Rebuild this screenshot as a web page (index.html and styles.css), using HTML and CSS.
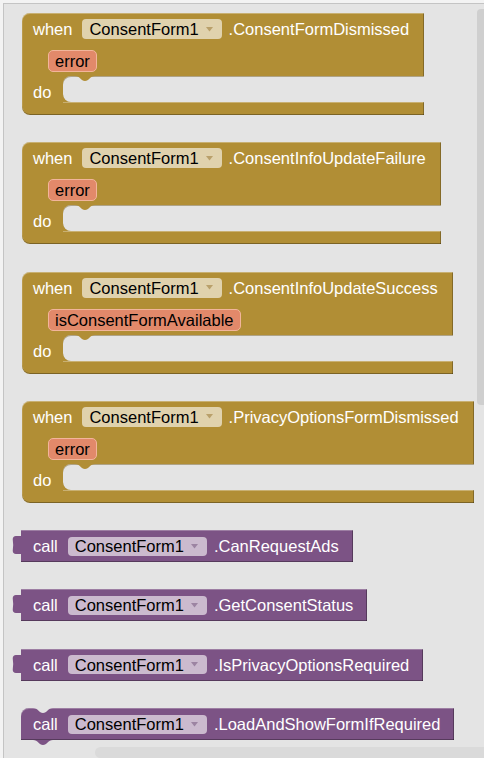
FILE: index.html
```html
<!DOCTYPE html>
<html>
<head>
<meta charset="utf-8">
<link rel="stylesheet" href="styles.css">
</head>
<body>
<div class="workspace">
  <div class="stack">

    <div class="event">
      <div class="ev-head">
        <div class="row"><span class="label">when</span><span class="dd">ConsentForm1<svg class="arrow" viewBox="0 0 7 5"><polygon points="0,0 7,0 3.5,4.5"/></svg></span><span class="label">.ConsentFormDismissed</span></div>
        <div class="params"><span class="param">error</span></div>
      </div>
      <div class="ev-do"><span class="arm">do</span><span class="slot"><svg class="bump" viewBox="0 0 20 5"><path d="M0,0 C5,0 6,5 10,5 C14,5 15,0 20,0 Z"/></svg></span></div>
      <div class="ev-foot"></div>
    </div>

    <div class="event">
      <div class="ev-head">
        <div class="row"><span class="label">when</span><span class="dd">ConsentForm1<svg class="arrow" viewBox="0 0 7 5"><polygon points="0,0 7,0 3.5,4.5"/></svg></span><span class="label">.ConsentInfoUpdateFailure</span></div>
        <div class="params"><span class="param">error</span></div>
      </div>
      <div class="ev-do"><span class="arm">do</span><span class="slot"><svg class="bump" viewBox="0 0 20 5"><path d="M0,0 C5,0 6,5 10,5 C14,5 15,0 20,0 Z"/></svg></span></div>
      <div class="ev-foot"></div>
    </div>

    <div class="event">
      <div class="ev-head">
        <div class="row"><span class="label">when</span><span class="dd">ConsentForm1<svg class="arrow" viewBox="0 0 7 5"><polygon points="0,0 7,0 3.5,4.5"/></svg></span><span class="label">.ConsentInfoUpdateSuccess</span></div>
        <div class="params"><span class="param">isConsentFormAvailable</span></div>
      </div>
      <div class="ev-do"><span class="arm">do</span><span class="slot"><svg class="bump" viewBox="0 0 20 5"><path d="M0,0 C5,0 6,5 10,5 C14,5 15,0 20,0 Z"/></svg></span></div>
      <div class="ev-foot"></div>
    </div>

    <div class="event">
      <div class="ev-head">
        <div class="row"><span class="label">when</span><span class="dd">ConsentForm1<svg class="arrow" viewBox="0 0 7 5"><polygon points="0,0 7,0 3.5,4.5"/></svg></span><span class="label">.PrivacyOptionsFormDismissed</span></div>
        <div class="params"><span class="param">error</span></div>
      </div>
      <div class="ev-do"><span class="arm">do</span><span class="slot"><svg class="bump" viewBox="0 0 20 5"><path d="M0,0 C5,0 6,5 10,5 C14,5 15,0 20,0 Z"/></svg></span></div>
      <div class="ev-foot"></div>
    </div>

    <div class="call">
      <svg class="tab" viewBox="0 0 10 18"><path d="M10,0 L10,18 C7,18 4,18.5 2.5,17 C1,15.5 2.2,12 2.2,9 C2.2,6 1,2.5 2.5,1 C4,-0.5 7,0 10,0 Z"/></svg>
      <span class="label">call</span><span class="dd">ConsentForm1<svg class="arrow" viewBox="0 0 7 5"><polygon points="0,0 7,0 3.5,4.5"/></svg></span><span class="label">.CanRequestAds</span>
    </div>

    <div class="call">
      <svg class="tab" viewBox="0 0 10 18"><path d="M10,0 L10,18 C7,18 4,18.5 2.5,17 C1,15.5 2.2,12 2.2,9 C2.2,6 1,2.5 2.5,1 C4,-0.5 7,0 10,0 Z"/></svg>
      <span class="label">call</span><span class="dd">ConsentForm1<svg class="arrow" viewBox="0 0 7 5"><polygon points="0,0 7,0 3.5,4.5"/></svg></span><span class="label">.GetConsentStatus</span>
    </div>

    <div class="call">
      <svg class="tab" viewBox="0 0 10 18"><path d="M10,0 L10,18 C7,18 4,18.5 2.5,17 C1,15.5 2.2,12 2.2,9 C2.2,6 1,2.5 2.5,1 C4,-0.5 7,0 10,0 Z"/></svg>
      <span class="label">call</span><span class="dd">ConsentForm1<svg class="arrow" viewBox="0 0 7 5"><polygon points="0,0 7,0 3.5,4.5"/></svg></span><span class="label">.IsPrivacyOptionsRequired</span>
    </div>

    <div class="call statement">
      <svg class="notch" viewBox="0 0 20 5"><path d="M0,0 C5,0 6,5 10,5 C14,5 15,0 20,0 Z"/></svg>
      <span class="label">call</span><span class="dd">ConsentForm1<svg class="arrow" viewBox="0 0 7 5"><polygon points="0,0 7,0 3.5,4.5"/></svg></span><span class="label">.LoadAndShowFormIfRequired</span>
      <svg class="nub" viewBox="0 0 20 5"><path d="M0,0 C5,0 6,5 10,5 C14,5 15,0 20,0 Z"/></svg>
    </div>

  </div>
  <div class="vscroll"></div>
  <div class="hscroll"></div>
</div>
</body>
</html>
```
FILE: styles.css
```css
html, body {
  margin: 0;
  padding: 0;
  height: 100%;
  background: #f3f3f3;
  overflow: hidden;
}

.workspace {
  position: relative;
  box-sizing: border-box;
  margin: 3px 0 0 3px;
  height: 755px;
  border-left: 1px solid #c4c4c4;
  border-top: 1px solid #c4c4c4;
  background: #e4e4e4;
  overflow: hidden;
  font-family: "Liberation Sans", Arial, sans-serif;
  font-size: 16.5px;
}

.stack {
  display: flex;
  flex-direction: column;
  align-items: flex-start;
  gap: 27.3px;
  padding: 9px 0 0 17px;
}

.label {
  color: #fff;
  line-height: 20px;
  white-space: nowrap;
}

.dd {
  display: inline-flex;
  align-items: center;
  box-sizing: border-box;
  height: 20px;
  line-height: 20px;
  padding: 0 9px 0 7px;
  margin: 0 7px 0 10px;
  border-radius: 4px;
  color: #000;
  white-space: nowrap;
}

.arrow {
  width: 7px;
  height: 5px;
  margin-left: 7px;
}

/* Event blocks */
.event {
  display: flex;
  flex-direction: column;
  margin-left: 1px;
}

.ev-head {
  background: #b18e35;
  border-radius: 8px 0 0 0;
  padding: 6px 15px 4px 11px;
  box-shadow: inset 0 1px 0 rgba(255, 255, 255, 0.3), inset 1px 0 0 rgba(255, 255, 255, 0.12), inset -1px 0 0 rgba(0, 0, 0, 0.25);
}

.ev-head .dd {
  background: #e0d2ad;
}

.ev-head .arrow {
  fill: #b9a06a;
}

.row {
  display: flex;
  align-items: center;
  height: 20px;
}

.params {
  display: flex;
  margin-top: 11px;
  padding-left: 15px;
}

.param {
  box-sizing: border-box;
  height: 22px;
  line-height: 20px;
  padding: 0 6px;
  border: 1px solid #f2b59b;
  border-radius: 5px;
  background: #e2896a;
  color: #000;
  white-space: nowrap;
}

.ev-do {
  display: flex;
  height: 26px;
  background: #b18e35;
}

.arm {
  box-sizing: border-box;
  width: 41px;
  padding: 6px 0 0 11px;
  line-height: 20px;
  color: #fff;
  box-shadow: inset 1px 0 0 rgba(255, 255, 255, 0.12);
}

.slot {
  position: relative;
  flex: 1;
  background: #e4e4e4;
  border-radius: 8px 0 0 8px;
  box-shadow: inset 0 1px 0 rgba(110, 85, 20, 0.45);
}

.bump {
  position: absolute;
  left: 12px;
  top: 0;
  width: 20px;
  height: 5px;
  fill: #b18e35;
}

.ev-foot {
  height: 13px;
  border-radius: 0 0 0 8px;
  background: linear-gradient(rgba(255, 255, 255, 0.3), rgba(255, 255, 255, 0.3)) no-repeat 41px 0 / 100% 1px, #b18e35;
  box-shadow: inset 0 -1px 0 rgba(0, 0, 0, 0.3), inset -1px 0 0 rgba(0, 0, 0, 0.25), inset 1px 0 0 rgba(255, 255, 255, 0.12);
}

/* Call blocks */
.call {
  position: relative;
  display: flex;
  align-items: center;
  box-sizing: border-box;
  height: 32px;
  padding: 0 14px 0 12px;
  background: #7c5385;
  box-shadow: inset 0 1px 0 rgba(255, 255, 255, 0.25), inset 0 -1px 0 rgba(0, 0, 0, 0.3), inset -1px 0 0 rgba(0, 0, 0, 0.3);
}

.call .dd {
  height: 19px;
  background: #cbbace;
}

.call .arrow {
  fill: #9c84a2;
}

.tab {
  position: absolute;
  left: -10px;
  top: 6px;
  width: 10px;
  height: 18px;
  fill: #7c5385;
}

.statement {
  border-radius: 8px 0 0 0;
}

.notch {
  position: absolute;
  left: 12px;
  top: 0;
  width: 20px;
  height: 5px;
  fill: #e4e4e4;
}

.nub {
  position: absolute;
  left: 12px;
  top: 100%;
  width: 20px;
  height: 5px;
  fill: #7c5385;
}

/* Scrollbars */
.vscroll {
  position: absolute;
  right: 0;
  top: 5px;
  width: 7px;
  height: 396px;
  background: #cfcfcf;
  border-radius: 4px 0 0 4px;
}

.hscroll {
  position: absolute;
  left: 91px;
  right: 0;
  bottom: 0;
  height: 11px;
  background: #dadada;
  border-radius: 6px 0 0 6px;
}
```
